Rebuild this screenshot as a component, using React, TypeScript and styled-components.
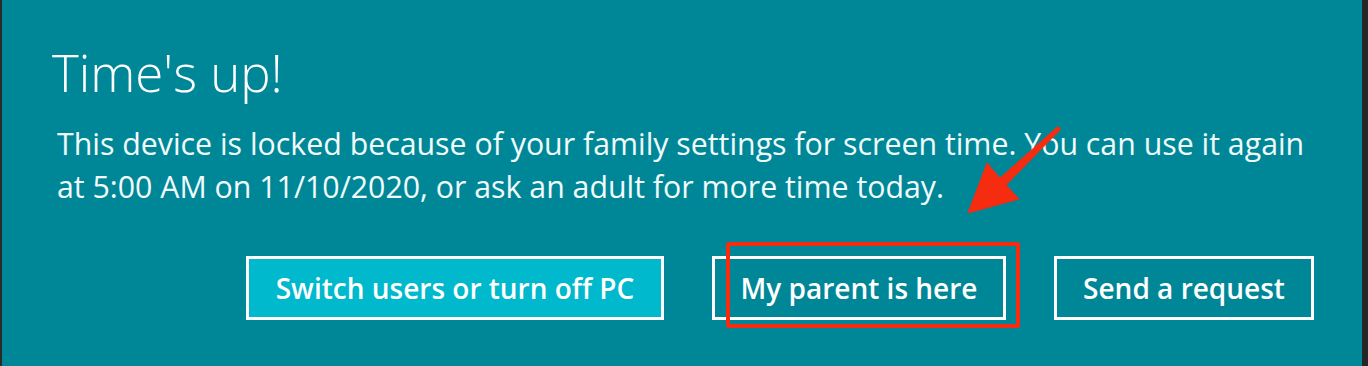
import React from "react";
import styled, { createGlobalStyle } from "styled-components";

const GlobalStyle = createGlobalStyle`
  html, body {
    margin: 0;
    padding: 0;
    background: #262626;
  }
`;

const Frame = styled.div`
  width: 1368px;
  height: 366px;
  box-sizing: border-box;
  border-left: 2px solid #2a2a2a;
  border-right: 6px solid #262626;
  background: #008797;
  overflow: hidden;
`;

const Panel = styled.div`
  position: relative;
  height: 100%;
  box-sizing: border-box;
  padding: 42px 48px 0 50px;
  display: flex;
  flex-direction: column;
  color: #ffffff;
  font-family: "Open Sans", "Noto Sans", sans-serif;
`;

const Title = styled.h1`
  margin: 0;
  font-size: 51px;
  font-weight: 300;
  line-height: 60px;
`;

const Message = styled.p`
  margin: 20px 0 0 5px;
  font-size: 30.3px;
  font-weight: 400;
  line-height: 43px;
  color: #f2fbfc;
`;

const ButtonRow = styled.div`
  display: flex;
  justify-content: flex-end;
  gap: 48px;
  margin-top: 48px;
`;

const ActionButton = styled.button<{ $primary?: boolean; $width: number }>`
  box-sizing: border-box;
  width: ${(p) => p.$width}px;
  height: 64px;
  border: 3px solid #ffffff;
  background: ${(p) => (p.$primary ? "#00b9cc" : "transparent")};
  color: #ffffff;
  font-family: "Open Sans", "Noto Sans", sans-serif;
  font-size: 28px;
  font-weight: 600;
  padding: 0;
  cursor: pointer;
`;

const Highlight = styled.div`
  position: absolute;
  left: 724px;
  top: 242px;
  width: 294px;
  height: 86px;
  box-sizing: border-box;
  border: 4px solid #f52c10;
  border-radius: 3px;
  pointer-events: none;
`;

const ArrowLayer = styled.svg`
  position: absolute;
  left: 0;
  top: 0;
  pointer-events: none;
`;

function Arrow() {
  return (
    <ArrowLayer width="1360" height="366" viewBox="-2 0 1360 366">
      <polygon
        points="1054,126.5 996,178 983,163 964,213 1015,199 1002,185 1056.5,129.5"
        fill="#f52c10"
        stroke="#f52c10"
        strokeWidth="1"
        strokeLinejoin="round"
      />
    </ArrowLayer>
  );
}

export default function App() {
  return (
    <>
      <GlobalStyle />
      <Frame>
        <Panel>
          <Title>Time's up!</Title>
          <Message>
            This device is locked because of your family settings for screen
            time. You can use it again at 5:00 AM on 11/10/2020, or ask an
            adult for more time today.
          </Message>
          <ButtonRow>
            <ActionButton $primary $width={418}>
              Switch users or turn off PC
            </ActionButton>
            <ActionButton $width={294}>My parent is here</ActionButton>
            <ActionButton $width={260}>Send a request</ActionButton>
          </ButtonRow>
          <Highlight />
          <Arrow />
        </Panel>
      </Frame>
    </>
  );
}
